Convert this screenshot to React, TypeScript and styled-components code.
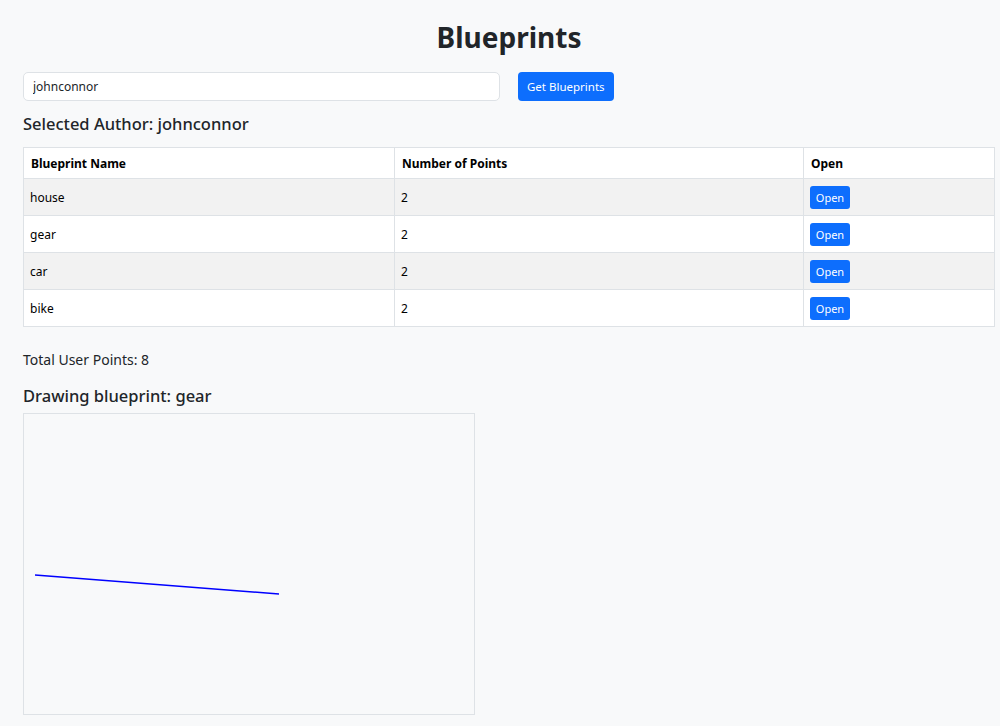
import React, { useState } from "react";
import styled, { createGlobalStyle } from "styled-components";

interface Blueprint {
  name: string;
  points: { x: number; y: number }[];
}

const blueprints: Blueprint[] = [
  { name: "house", points: [{ x: 20, y: 40 }, { x: 200, y: 90 }] },
  { name: "gear", points: [{ x: 11, y: 161 }, { x: 255, y: 180 }] },
  { name: "car", points: [{ x: 30, y: 30 }, { x: 120, y: 220 }] },
  { name: "bike", points: [{ x: 60, y: 60 }, { x: 300, y: 100 }] },
];

const GlobalStyle = createGlobalStyle`
  body {
    margin: 0;
    background: #f8f9fa;
    color: #212529;
    font-family: "Noto Sans", "Open Sans", sans-serif;
  }
`;

export default function App() {
  const [author, setAuthor] = useState("johnconnor");
  const [selected, setSelected] = useState("gear");
  const current = blueprints.find((b) => b.name === selected);
  const total = blueprints.reduce((acc, b) => acc + b.points.length, 0);

  return (
    <>
      <GlobalStyle />
      <Page>
        <Title>Blueprints</Title>
        <SearchRow>
          <AuthorInput value={author} onChange={(e) => setAuthor(e.target.value)} />
          <PrimaryButton>Get Blueprints</PrimaryButton>
        </SearchRow>
        <SubTitle>Selected Author: johnconnor</SubTitle>
        <Table>
          <colgroup>
            <col style={{ width: 371 }} />
            <col style={{ width: 409 }} />
            <col style={{ width: 191 }} />
          </colgroup>
          <thead>
            <tr>
              <Th>Blueprint Name</Th>
              <Th>Number of Points</Th>
              <Th>Open</Th>
            </tr>
          </thead>
          <tbody>
            {blueprints.map((bp, i) => (
              <Row key={bp.name} $striped={i % 2 === 0}>
                <Td>{bp.name}</Td>
                <Td>{bp.points.length}</Td>
                <Td>
                  <SmallButton onClick={() => setSelected(bp.name)}>Open</SmallButton>
                </Td>
              </Row>
            ))}
          </tbody>
        </Table>
        <Total>Total User Points: {total}</Total>
        <DrawingTitle>Drawing blueprint: {selected}</DrawingTitle>
        <Canvas>
          <svg width="450" height="300">
            {current && (
              <polyline
                points={current.points.map((p) => `${p.x},${p.y}`).join(" ")}
                fill="none"
                stroke="#0000ff"
                strokeWidth="1.6"
              />
            )}
          </svg>
        </Canvas>
      </Page>
    </>
  );
}

const Page = styled.div`
  padding: 19px 5px 0 23px;
  display: flex;
  flex-direction: column;
  align-items: flex-start;
`;

const Title = styled.h1`
  align-self: stretch;
  text-align: center;
  margin: 0 0 17px 0;
  font-size: 28px;
  font-weight: 700;
  line-height: 36px;
`;

const SearchRow = styled.div`
  display: flex;
  gap: 18px;
  align-items: center;
`;

const AuthorInput = styled.input`
  box-sizing: border-box;
  width: 477px;
  height: 29px;
  padding: 0 9px;
  border: 1px solid #dee2e6;
  border-radius: 5px;
  background: #fff;
  font-family: inherit;
  font-size: 12px;
  color: #212529;
  outline: none;
`;

const PrimaryButton = styled.button`
  box-sizing: border-box;
  height: 29px;
  padding: 0 9px;
  border: none;
  border-radius: 4px;
  background: #0d6efd;
  color: #fff;
  font-family: inherit;
  font-size: 11.5px;
  cursor: pointer;
`;

const SubTitle = styled.h3`
  margin: 12px 0 0 0;
  font-size: 16.5px;
  font-weight: 500;
  line-height: 22px;
`;

const DrawingTitle = styled(SubTitle)`
  margin-top: 15px;
`;

const Table = styled.table`
  margin-top: 12px;
  width: 971px;
  border-collapse: collapse;
  table-layout: fixed;
  background: #fff;
  font-size: 12px;
`;

const Th = styled.th`
  text-align: left;
  height: 30px;
  padding: 0 7px;
  border: 1px solid #dee2e6;
  font-weight: 700;
  color: #000;
`;

const Row = styled.tr<{ $striped: boolean }>`
  background: ${(p) => (p.$striped ? "#f2f2f2" : "#fff")};
`;

const Td = styled.td`
  height: 36px;
  padding: 0 6px;
  border: 1px solid #dee2e6;
  color: #000;
  vertical-align: middle;
`;

const SmallButton = styled.button`
  box-sizing: border-box;
  height: 23px;
  width: 40px;
  padding: 0;
  border: none;
  border-radius: 3px;
  background: #0d6efd;
  color: #fff;
  font-family: inherit;
  font-size: 11px;
  cursor: pointer;
`;

const Total = styled.p`
  margin: 23px 0 0 0;
  font-size: 14px;
  line-height: 20px;
`;

const Canvas = styled.div`
  margin-top: 6px;
  border: 1px solid #dee2e6;
  line-height: 0;
`;
